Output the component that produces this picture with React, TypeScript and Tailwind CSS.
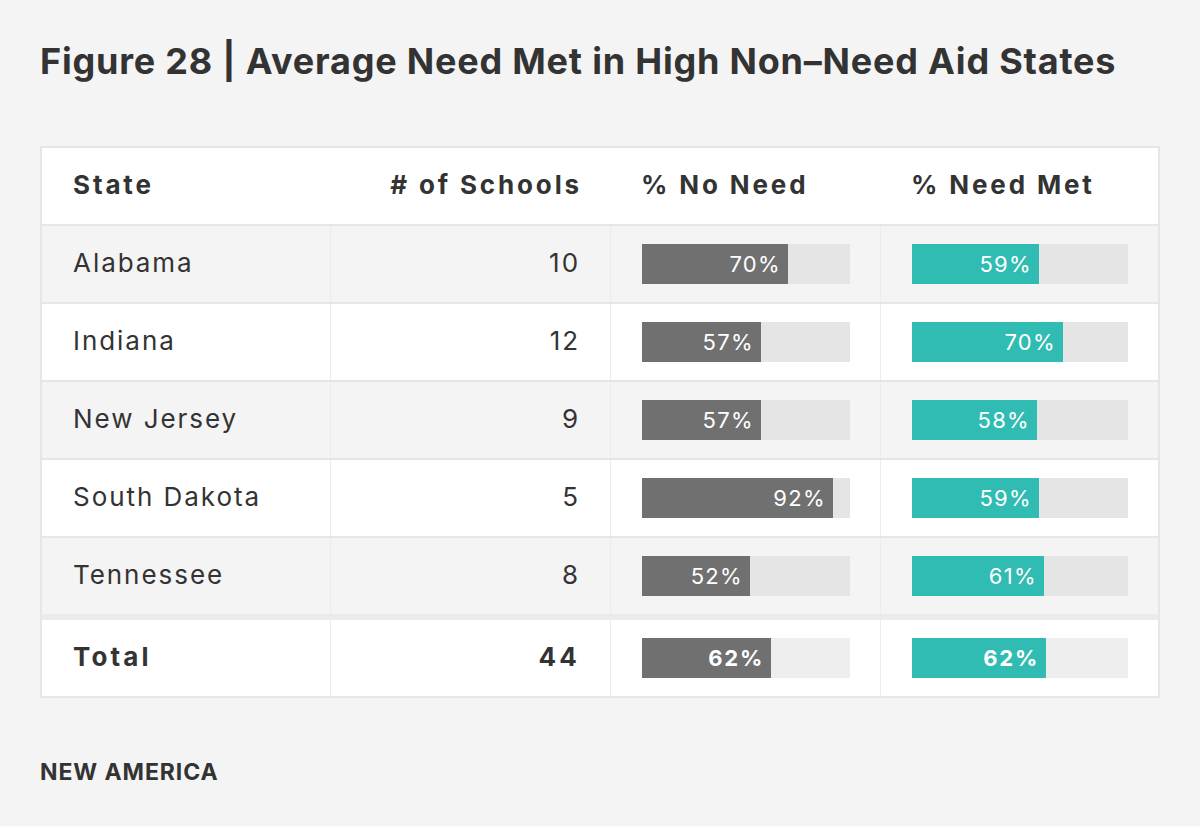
const rows = [
  { state: 'Alabama', schools: 10, noNeed: 70, needMet: 59 },
  { state: 'Indiana', schools: 12, noNeed: 57, needMet: 70 },
  { state: 'New Jersey', schools: 9, noNeed: 57, needMet: 58 },
  { state: 'South Dakota', schools: 5, noNeed: 92, needMet: 59 },
  { state: 'Tennessee', schools: 8, noNeed: 52, needMet: 61 },
]

const total = { state: 'Total', schools: 44, noNeed: 62, needMet: 62 }

function Bar({ value, width, color, track, bold }: { value: number; width: number; color: string; track: string; bold?: boolean }) {
  return (
    <div className={`h-[40px] ${track}`} style={{ width }}>
      <div
        className={`h-full ${color} flex items-center justify-end pr-[7px] text-white text-[22px] ${bold ? 'font-bold tracking-[0.08em]' : 'tracking-[0.06em]'}`}
        style={{ width: Math.round((width * value) / 100) }}
      >
        {value}%
      </div>
    </div>
  )
}

function Row({ r, bg, total }: { r: typeof total; bg: string; total?: boolean }) {
  const track = total ? 'bg-[#eeeeee]' : 'bg-[#e5e5e5]'
  const text = total ? 'font-bold tracking-[0.12em]' : 'tracking-[0.075em]'
  return (
    <div className={`grid grid-cols-[288px_280px_270px_278px] h-[76px] ${bg}`}>
      <div className={`flex items-center pl-[31px] pb-[3px] text-[26px] ${text}`}>{r.state}</div>
      <div className={`flex items-center justify-end pr-[30px] pb-[3px] text-[26px] ${text} border-l border-[#ececec]`}>{r.schools}</div>
      <div className="flex items-center pl-[31px] border-l border-[#ececec]">
        <Bar value={r.noNeed} width={208} color="bg-[#707070]" track={track} bold={total} />
      </div>
      <div className="flex items-center pl-[31px] border-l border-[#ececec]">
        <Bar value={r.needMet} width={216} color="bg-[#30bcb3]" track={track} bold={total} />
      </div>
    </div>
  )
}

export default function App() {
  return (
    <div className="w-[1200px] h-[826px] bg-[#f4f4f4] text-[#333333] font-['Inter',sans-serif] pt-[36px] px-[40px]">
      <h1 className="text-[36px] font-bold leading-[50px] tracking-[0.022em] whitespace-nowrap">
        Figure 28 | Average Need Met in High Non–Need Aid States
      </h1>

      <div className="mt-[60px] w-[1120px] border-2 border-[#e6e6e6] bg-white">
        <div className="grid grid-cols-[288px_280px_270px_278px] h-[76px] pb-[4px] font-bold text-[26px] tracking-[0.11em]">
          <div className="flex items-center pl-[31px]">State</div>
          <div className="flex items-center justify-end pr-[28px]"># of Schools</div>
          <div className="flex items-center pl-[31px]">% No Need</div>
          <div className="flex items-center pl-[31px]">% Need Met</div>
        </div>
        {rows.map((r, i) => (
          <div key={r.state} className="border-t-2 border-[#e6e6e6]">
            <Row r={r} bg={i % 2 === 0 ? 'bg-[#f4f4f4]' : 'bg-white'} />
          </div>
        ))}
        <div className="border-t-[6px] border-[#ebebeb]">
          <Row r={total} bg="bg-white" total />
        </div>
      </div>

      <div className="mt-[57px] text-[23px] font-bold tracking-[0.04em]">NEW AMERICA</div>
    </div>
  )
}
